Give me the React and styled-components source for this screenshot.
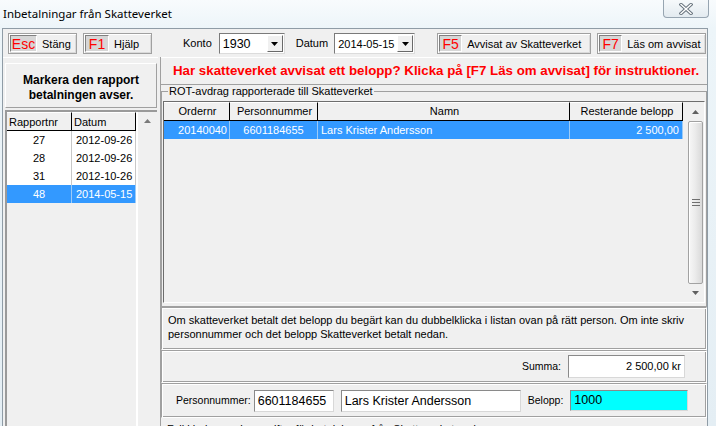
import React from 'react';
import styled, { createGlobalStyle } from 'styled-components';

const Global = createGlobalStyle`
  html, body { margin: 0; padding: 0; width: 716px; height: 426px; overflow: hidden; background: #eaf2f7; }
  body { font-family: "Liberation Sans", Arial, sans-serif; color: #000; }
  #root { width: 716px; height: 426px; }
  * { box-sizing: border-box; }
`;

const Window = styled.div`
  width: 716px;
  height: 426px;
  overflow: hidden;
  display: flex;
  flex-direction: column;
  background: linear-gradient(to bottom, #f8fbfd 0px, #edf5f9 28px, #e4eef4 100%);
`;

const TitleBar = styled.div`
  height: 28px;
  flex: none;
  display: flex;
  align-items: flex-start;
`;

const Title = styled.div`
  font-family: "Noto Sans", "Liberation Sans", sans-serif;
  font-size: 11.5px;
  line-height: 16px;
  padding: 6px 0 0 3px;
`;

const CloseBtn = styled.div`
  margin-left: auto;
  margin-right: 7px;
  width: 46px;
  height: 18px;
  border: 1px solid #97a5b1;
  border-top: none;
  border-radius: 0 0 4px 4px;
  background: linear-gradient(#f6f9fb, #e3ebf0);
  display: flex;
  align-items: center;
  justify-content: center;
`;

const Frame = styled.div`
  flex: 1;
  min-height: 0;
  margin-left: 2px;
  width: 706px;
  background: #f0f0f0;
  border: 1px solid #8f9ca6;
  border-bottom: none;
  display: flex;
  flex-direction: column;
`;

const Toolbar = styled.div`
  height: 28px;
  flex: none;
  display: flex;
  align-items: flex-start;
  padding: 4px 0 0 5px;
  font-size: 11px;
`;

const KeyButton = styled.div`
  width: ${p => p.$w}px;
  height: 21px;
  margin-left: ${p => p.$ml || 0}px;
  display: flex;
  align-items: center;
  gap: 5px;
  padding: 0 1px;
  border: 1px solid #a0a0a0;
  background: #f0f0f0;
  box-shadow: inset 1px 1px #fff, inset -1px -1px #dadada;
  font-size: 11px;
  white-space: nowrap;
`;

const KeyCap = styled.span`
  height: 17px;
  width: ${p => p.$w}px;
  display: flex;
  align-items: center;
  justify-content: center;
  background: #d6d6d6;
  color: #ff0000;
  font-size: 14px;
  border: 1px solid;
  border-color: #808080 #ffffff #ffffff #808080;
`;

const FieldLabel = styled.span`
  font-size: ${p => p.$fs || 11}px;
  margin-left: ${p => p.$ml || 0}px;
  margin-right: ${p => p.$mr || 0}px;
  line-height: 21px;
  white-space: nowrap;
`;

const Combo = styled.div`
  width: ${p => p.$w}px;
  height: 21px;
  background: #fff;
  border: 1px solid;
  border-color: #7a7a7a #dcdcdc #dcdcdc #7a7a7a;
  display: flex;
  align-items: center;
`;

const ComboText = styled.span`
  flex: 1;
  padding-left: 3px;
  font-size: ${p => p.$fs || 11}px;
`;

const ComboArrow = styled.div`
  width: 16px;
  height: 17px;
  margin-right: 1px;
  background: #f0f0f0;
  border: 1px solid;
  border-color: #fff #696969 #696969 #fff;
  display: flex;
  align-items: center;
  justify-content: center;
`;

const Main = styled.div`
  flex: 1;
  min-height: 0;
  display: flex;
`;

const LeftPane = styled.div`
  width: 155px;
  flex: none;
  display: flex;
  flex-direction: column;
  padding: 5px 1px 0 2px;
  border-top: 1px solid #fff;
`;

const HeaderBox = styled.div`
  height: 45px;
  flex: none;
  border: 1px solid;
  border-color: #fff #a0a0a0 #a0a0a0 #fff;
  font-weight: bold;
  font-size: 12px;
  line-height: 15px;
  text-align: center;
  padding-top: 9px;
`;

const ListWrap = styled.div`
  flex: 1;
  margin-top: 2px;
  display: flex;
  border-top: 2px solid #9a9a9a;
  border-left: 2px solid #9a9a9a;
`;

const ListTable = styled.div`
  width: 131px;
  flex: none;
  display: flex;
  flex-direction: column;
  background: #f0f0f0;
  border-right: 2px solid #fff;
`;

const ListHead = styled.div`
  height: 19px;
  display: grid;
  grid-template-columns: 65px 1fr;
  border-bottom: 1px solid #000;
  font-size: 11px;
  line-height: 18px;
`;

const HeadCell = styled.div`
  padding-left: 2px;
  border-right: 1px solid #000;
  border-top: 1px solid #fff;
  text-align: ${p => p.$align || 'left'};
  white-space: nowrap;
  overflow: hidden;
`;

const ListRow = styled.div`
  height: 18px;
  display: grid;
  grid-template-columns: 65px 1fr;
  font-size: 11px;
  line-height: 18px;
  background: ${p => (p.$sel ? '#3399ff' : '#fff')};
  color: ${p => (p.$sel ? '#fff' : '#000')};
`;

const Cell = styled.div`
  text-align: ${p => p.$align || 'left'};
  padding: ${p => p.$pad || '0 2px'};
  border-right: 1px solid ${p => (p.$sel ? '#9ccbf7' : '#c8c8c8')};
  white-space: nowrap;
  overflow: hidden;
`;

const LeftScroll = styled.div`
  flex: 1;
  display: flex;
  justify-content: center;
  padding-top: 7px;
`;

const RightPane = styled.div`
  flex: 1;
  min-width: 0;
  margin-left: 2px;
  display: flex;
  flex-direction: column;
  border-left: 1px solid #a0a0a0;
`;

const Banner = styled.div`
  height: 28px;
  flex: none;
  border-top: 1px solid #fff;
  border-bottom: 1px solid #a0a0a0;
  padding-left: 12px;
  color: #ff0000;
  font-weight: bold;
  font-size: 13.3px;
  line-height: 26px;
  white-space: nowrap;
`;

const Group = styled.fieldset`
  margin: 0;
  height: 222px;
  flex: none;
  padding: 3px 1px 1px 1px;
  border: 1px solid #a0a0a0;
  min-width: 0;
`;

const Legend = styled.legend`
  font-size: 11px;
  line-height: 13px;
  padding: 0 1px;
  margin-left: 5px;
`;

const GridWrap = styled.div`
  height: 202px;
  display: flex;
  border: 1px solid;
  border-color: #6d6d6d #fff #fff #6d6d6d;
`;

const GridTable = styled.div`
  width: 519px;
  flex: none;
  display: flex;
  flex-direction: column;
  background: #f0f0f0;
`;

const GridHead = styled.div`
  height: 19px;
  display: grid;
  grid-template-columns: 66px 88px 252px 113px;
  border-bottom: 1px solid #000;
  font-size: 11px;
  line-height: 17px;
`;

const GridRow = styled.div`
  height: 18px;
  display: grid;
  grid-template-columns: 66px 88px 252px 113px;
  font-size: 11px;
  line-height: 18px;
  background: #3399ff;
  color: #fff;
`;

const Scroll = styled.div`
  flex: 1;
  display: flex;
  flex-direction: column;
  padding: 0 1px 0 5px;
`;

const ArrowBox = styled.div`
  height: ${p => p.$h}px;
  flex: none;
  display: flex;
  align-items: center;
  justify-content: center;
`;

const Thumb = styled.div`
  flex: 1;
  border: 1px solid #a2a2a2;
  border-radius: 2px;
  background: linear-gradient(to right, #f7f7f7 0%, #ececec 45%, #d9d9d9 100%);
  box-shadow: inset 1px 1px #fff;
  display: flex;
  align-items: center;
  justify-content: center;
`;

const Panel = styled.div`
  flex: none;
  height: ${p => p.$h}px;
  border: 1px solid;
  border-color: #a0a0a0 #fff #fff #a0a0a0;
  box-shadow: inset 1px 1px #fff, inset -1px -1px #a0a0a0;
`;

const InfoBox = styled(Panel)`
  padding: 5px 5px 0 6px;
  font-size: 11px;
  line-height: 14px;
`;

const RowBox = styled(Panel)`
  display: flex;
  align-items: center;
  justify-content: ${p => p.$justify || 'flex-start'};
  padding: ${p => p.$pad};
`;

const Input = styled.div`
  width: ${p => p.$w}px;
  height: ${p => p.$h || 22}px;
  margin-left: ${p => p.$ml || 0}px;
  background: ${p => p.$bg || '#fff'};
  border: 1px solid;
  border-color: #8a8a8a #d8d8d8 #d8d8d8 #8a8a8a;
  font-size: ${p => p.$fs || 12.5}px;
  line-height: ${p => (p.$h || 22) - 2}px;
  padding: 0 3px;
  text-align: ${p => p.$align || 'left'};
  white-space: nowrap;
  overflow: hidden;
`;

const Footer = styled.div`
  font-size: 11px;
  line-height: 14px;
  padding: 4px 0 0 6px;
  white-space: nowrap;
`;

const DownTri = ({ w = 7, h = 4, c = '#000' }) => (
  <svg width={w} height={h} viewBox={`0 0 ${w} ${h}`}>
    <polygon points={`0,0 ${w},0 ${w / 2},${h}`} fill={c} />
  </svg>
);

const UpTri = ({ w = 7, h = 4, c = '#000' }) => (
  <svg width={w} height={h} viewBox={`0 0 ${w} ${h}`}>
    <polygon points={`0,${h} ${w},${h} ${w / 2},0`} fill={c} />
  </svg>
);

const Grip = () => (
  <svg width="8" height="7" viewBox="0 0 8 7">
    <rect x="0" y="0" width="8" height="1" fill="#6f6f6f" />
    <rect x="0" y="3" width="8" height="1" fill="#6f6f6f" />
    <rect x="0" y="6" width="8" height="1" fill="#6f6f6f" />
  </svg>
);

const leftRows = [
  ['27', '2012-09-26'],
  ['28', '2012-09-26'],
  ['31', '2012-10-26'],
  ['48', '2014-05-15', true],
];

export default function App() {
  return (
    <>
      <Global />
      <Window>
        <TitleBar>
          <Title>Inbetalningar från Skatteverket</Title>
          <CloseBtn>
            <svg width="14" height="12" viewBox="0 0 14 12">
              <path d="M2 1.5 L12 10.5 M12 1.5 L2 10.5" stroke="#68747e" strokeWidth="3.4" strokeLinecap="square" />
              <path d="M2 1.5 L12 10.5 M12 1.5 L2 10.5" stroke="#ffffff" strokeWidth="1.4" strokeLinecap="square" />
            </svg>
          </CloseBtn>
        </TitleBar>
        <Frame>
          <Toolbar>
            <KeyButton $w={69}>
              <KeyCap $w={27}>Esc</KeyCap>Stäng
            </KeyButton>
            <KeyButton $w={69} $ml={6}>
              <KeyCap $w={24}>F1</KeyCap>Hjälp
            </KeyButton>
            <FieldLabel $ml={31} $mr={7}>Konto</FieldLabel>
            <Combo $w={66}>
              <ComboText $fs={12.5}>1930</ComboText>
              <ComboArrow><DownTri /></ComboArrow>
            </Combo>
            <FieldLabel $ml={11} $mr={6}>Datum</FieldLabel>
            <Combo $w={81}>
              <ComboText>2014-05-15</ComboText>
              <ComboArrow><DownTri /></ComboArrow>
            </Combo>
            <KeyButton $w={154} $ml={22}>
              <KeyCap $w={23}>F5</KeyCap>Avvisat av Skatteverket
            </KeyButton>
            <KeyButton $w={109} $ml={6}>
              <KeyCap $w={23}>F7</KeyCap>Läs om avvisat
            </KeyButton>
          </Toolbar>
          <Main>
            <LeftPane>
              <HeaderBox>
                Markera den rapport
                <br />
                betalningen avser.
              </HeaderBox>
              <ListWrap>
                <ListTable>
                  <ListHead>
                    <HeadCell>Rapportnr</HeadCell>
                    <HeadCell>Datum</HeadCell>
                  </ListHead>
                  {leftRows.map(([nr, d, sel]) => (
                    <ListRow key={nr} $sel={sel}>
                      <Cell $align="center" $sel={sel}>{nr}</Cell>
                      <Cell $sel={sel} $pad="0 0 0 4px">{d}</Cell>
                    </ListRow>
                  ))}
                </ListTable>
                <LeftScroll>
                  <UpTri w={7} h={4} c="#7a7a7a" />
                </LeftScroll>
              </ListWrap>
            </LeftPane>
            <RightPane>
              <Banner>
                Har skatteverket avvisat ett belopp? Klicka på [F7 Läs om avvisat] för instruktioner.
              </Banner>
              <Group>
                <Legend>ROT-avdrag rapporterade till Skatteverket</Legend>
                <GridWrap>
                  <GridTable>
                    <GridHead>
                      <HeadCell $align="center">Ordernr</HeadCell>
                      <HeadCell $align="center">Personnummer</HeadCell>
                      <HeadCell $align="center">Namn</HeadCell>
                      <HeadCell $align="center">Resterande belopp</HeadCell>
                    </GridHead>
                    <GridRow>
                      <Cell $sel $align="right">20140040</Cell>
                      <Cell $sel $align="center">6601184655</Cell>
                      <Cell $sel $pad="0 3px">Lars Krister Andersson</Cell>
                      <Cell $sel $align="right" $pad="0 3px">2 500,00</Cell>
                    </GridRow>
                  </GridTable>
                  <Scroll>
                    <ArrowBox $h={19}><UpTri w={7} h={4} c="#606060" /></ArrowBox>
                    <Thumb><Grip /></Thumb>
                    <ArrowBox $h={18}><DownTri w={7} h={4} c="#606060" /></ArrowBox>
                  </Scroll>
                </GridWrap>
              </Group>
              <InfoBox $h={43}>
                Om skatteverket betalt det belopp du begärt kan du dubbelklicka i listan ovan på rätt person. Om inte skriv
                <br />
                personnummer och det belopp Skatteverket betalt nedan.
              </InfoBox>
              <RowBox $h={33} $justify="flex-end" $pad="0 21px 0 0">
                <FieldLabel $fs={10.5} $mr={7}>Summa:</FieldLabel>
                <Input $w={117} $h={23} $fs={11} $align="right">2 500,00 kr</Input>
              </RowBox>
              <RowBox $h={35} $pad="0 0 0 14px">
                <FieldLabel $fs={10.5} $mr={3}>Personnummer:</FieldLabel>
                <Input $w={80}>6601184655</Input>
                <Input $w={180} $ml={7}>Lars Krister Andersson</Input>
                <FieldLabel $fs={10.5} $ml={7} $mr={7}>Belopp:</FieldLabel>
                <Input $w={118} $h={21} $bg="#00ffff">1000</Input>
              </RowBox>
              <Footer>Fyll i belopp och uppgifter för betalningen från Skatteverket nedan.</Footer>
            </RightPane>
          </Main>
        </Frame>
      </Window>
    </>
  );
}
